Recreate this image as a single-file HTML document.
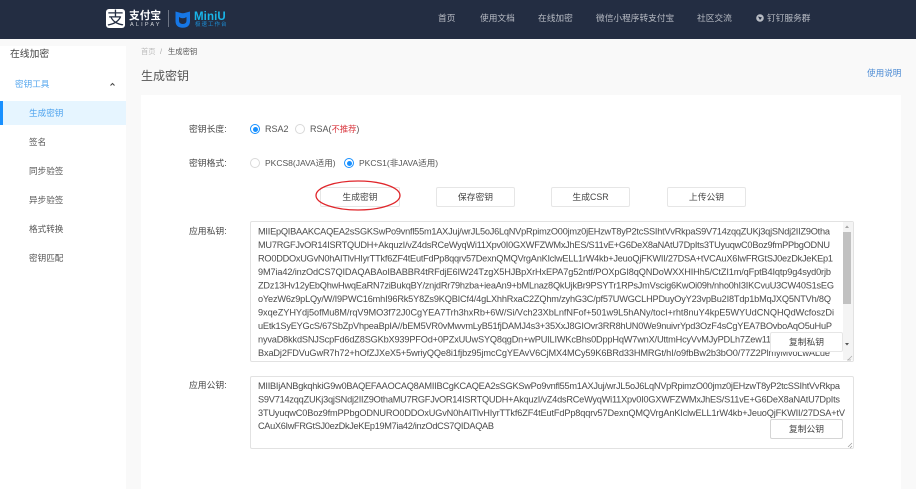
<!DOCTYPE html>
<html lang="zh-CN">
<head>
<meta charset="utf-8">
<title>生成密钥</title>
<style>
html,body{margin:0;padding:0;width:918px;height:489px;overflow:hidden;background:#f9f9f9}
body{position:relative;font-family:"Liberation Sans","Noto Sans CJK SC",sans-serif;color:#555}
.a{position:absolute;white-space:nowrap;line-height:12px}
.head{position:absolute;left:0;top:0;width:918px;height:39px;background:#232d42}
.nav{color:#b8bcc4;font-size:8.7px;top:12px}
.side{position:absolute;left:0;top:46px;width:126px;height:443px;background:#fff}
.card{position:absolute;left:141px;top:95px;width:760px;height:394px;background:#fff}
.mi{font-size:8.6px;left:29px;color:#555}
.lab{font-size:8.8px;color:#444;left:189px}
.opt{font-size:9px;color:#555}
.r{position:absolute;width:8px;height:8px;border:1px solid #d9d9d9;border-radius:50%;background:#fff}
.r.on{border-color:#1890ff}
.r.on:after{content:"";position:absolute;left:1.5px;top:1.5px;width:5px;height:5px;border-radius:50%;background:#1890ff}
.btn{position:absolute;box-sizing:border-box;height:20px;border:1px solid #e6e6e6;border-radius:2px;background:#fff;font-size:8.8px;color:#444;text-align:center;line-height:18px}
.ta{position:absolute;box-sizing:border-box;left:250px;width:604px;background:#fff;border:1px solid #e2e2e2;border-radius:2px}
svg{position:absolute;left:0;top:0}
.k{font-family:"Liberation Sans",sans-serif;font-size:9.2px;fill:#4a4a4a}
</style>
</head>
<body>
<div class="head"></div>
<div class="a" style="left:916px;top:0;width:2px;height:489px;background:#fff"></div>

<!-- logo -->
<div class="a" style="left:106px;top:9px;width:19px;height:19px;background:#fff;border-radius:3px;color:#232d42;font-size:17px;line-height:19px;text-align:center">支</div>
<div class="a" style="left:129px;top:10px;color:#fff;font-size:10.7px;line-height:12px;font-weight:bold">支付宝</div>
<div class="a" style="left:130px;top:22px;color:#d5d8dd;font-size:5.500px;line-height:7px;letter-spacing:2.200px">ALIPAY</div>
<div class="a" style="left:168px;top:10px;width:1px;height:17px;background:#6d7585"></div>
<svg width="918" height="40" style="z-index:1">
<path d="M175.500 11.500 L180 12.800 Q182.800 13.800 185.500 12.800 L190 11.500 L190 21 Q190 27.500 182.800 27.800 Q175.500 27.500 175.500 21 Z" fill="#1677e6"/>
<path d="M179 17 L179 20.500 Q179 24 182.800 24 Q186.500 24 186.500 20.500 L186.500 17 Q182.800 19.500 179 17 Z" fill="#232d42"/>
</svg>
<div class="a" style="left:194px;top:10px;color:#19b5e8;font-size:11.500px;line-height:14px;font-weight:bold;letter-spacing:.1px">MiniU</div>
<div class="a" style="left:195px;top:22px;color:#1b8fd8;font-size:5.500px;line-height:7px;letter-spacing:1px">极速工作台</div>

<!-- nav -->
<div class="a nav" style="left:438px">首页</div>
<div class="a nav" style="left:480px">使用文档</div>
<div class="a nav" style="left:538px">在线加密</div>
<div class="a nav" style="left:596px">微信小程序转支付宝</div>
<div class="a nav" style="left:697px">社区交流</div>
<svg width="918" height="40" style="z-index:1"><circle cx="760" cy="18" r="3.800" fill="#b8bcc4"/><path d="M758 16.500 L762 17.500 L760 20 Z" fill="#232d42"/></svg>
<div class="a nav" style="left:767px">钉钉服务群</div>

<!-- sidebar -->
<div class="side"></div>
<div class="a" style="left:10px;top:49px;font-size:9.800px;color:#444">在线加密</div>
<div class="a" style="left:15px;top:78px;font-size:8.600px;color:#55a6ee">密钥工具</div>
<svg width="130" height="100" style="z-index:1"><path d="M110.500 85.500 L112.500 83.500 L114.500 85.500" fill="none" stroke="#444" stroke-width="1"/></svg>
<div class="a" style="left:0;top:101px;width:126px;height:24px;background:#e6f5ff"></div>
<div class="a" style="left:0;top:101px;width:3px;height:24px;background:#1890ff"></div>
<div class="a mi" style="top:107px;color:#4ea3ee">生成密钥</div>
<div class="a mi" style="top:136px">签名</div>
<div class="a mi" style="top:165px">同步验签</div>
<div class="a mi" style="top:194px">异步验签</div>
<div class="a mi" style="top:223px">格式转换</div>
<div class="a mi" style="top:252px">密钥匹配</div>

<!-- header of content -->
<div class="a" style="left:141px;top:46px;font-size:7.300px;color:#bbb">首页</div>
<div class="a" style="left:160px;top:46px;font-size:7.300px;color:#aaa">/</div>
<div class="a" style="left:168px;top:46px;font-size:7.300px;color:#555">生成密钥</div>
<div class="a" style="left:141px;top:70px;font-size:12px;color:#555">生成密钥</div>
<div class="a" style="left:867px;top:67px;font-size:8.600px;color:#4a8ad4">使用说明</div>

<div class="card"></div>

<!-- options -->
<div class="a lab" style="top:123px">密钥长度:</div>
<div class="r on" style="left:250px;top:124px"></div>
<div class="a opt" style="left:265px;top:123px">RSA2</div>
<div class="r" style="left:295px;top:124px"></div>
<div class="a opt" style="left:310px;top:123px">RSA(<span style="color:#d9363e;font-size:8.300px">不推荐</span>)</div>

<div class="a lab" style="top:157px">密钥格式:</div>
<div class="r" style="left:250px;top:158px"></div>
<div class="a opt" style="left:265px;top:157px;font-size:8.500px">PKCS8(JAVA适用)</div>
<div class="r on" style="left:344px;top:158px"></div>
<div class="a opt" style="left:359px;top:157px;font-size:8.500px">PKCS1(非JAVA适用)</div>

<!-- buttons -->
<div class="btn" style="left:320px;top:187px;width:80px">生成密钥</div>
<div class="btn" style="left:436px;top:187px;width:79px">保存密钥</div>
<div class="btn" style="left:551px;top:187px;width:79px">生成CSR</div>
<div class="btn" style="left:667px;top:187px;width:79px">上传公钥</div>
<svg width="918" height="489" style="z-index:3;pointer-events:none"><ellipse cx="358" cy="195.500" rx="42" ry="14.500" fill="none" stroke="#e0262b" stroke-width="1.300"/></svg>

<!-- private key -->
<div class="a lab" style="top:225px">应用私钥:</div>
<div class="ta" style="top:221px;height:141px"></div>
<!-- public key -->
<div class="a lab" style="top:379px">应用公钥:</div>
<div class="ta" style="top:376px;height:73px"></div>

<svg width="918" height="489" style="z-index:1">
<defs><clipPath id="c"><rect x="251" y="222" width="592" height="138"/></clipPath></defs>
<g clip-path="url(#c)" class="keys">
<text class="k" x="258" y="234.500" textLength="572" lengthAdjust="spacing">MIIEpQIBAAKCAQEA2sSGKSwPo9vnfl55m1AXJuj/wrJL5oJ6LqNVpRpimzO00jmz0jEHzwT8yP2tcSSIhtVvRkpaS9V714zqqZUKj3qjSNdj2IIZ9Otha</text>
<text class="k" x="258" y="248" textLength="572" lengthAdjust="spacing">MU7RGFJvOR14ISRTQUDH+AkquzI/vZ4dsRCeWyqWi11Xpv0I0GXWFZWMxJhES/S11vE+G6DeX8aNAtU7DpIts3TUyuqwC0Boz9fmPPbgODNU</text>
<text class="k" x="258" y="261.500" textLength="575" lengthAdjust="spacing">RO0DDOxUGvN0hAITlvHIyrTTkf6ZF4tEutFdPp8qqrv57DexnQMQVrgAnKIclwELL1rW4kb+JeuoQjFKWII/27DSA+tVCAuX6IwFRGtSJ0ezDkJeKEp1</text>
<text class="k" x="258" y="275" textLength="573" lengthAdjust="spacing">9M7ia42/inzOdCS7QIDAQABAoIBABBR4tRFdjE6IW24TzgX5HJBpXrHxEPA7g52ntf/POXpGI8qQNDoWXXHIHh5/CtZI1m/qFptB4Iqtp9g4syd0rjb</text>
<text class="k" x="258" y="288.500" textLength="576" lengthAdjust="spacing">ZDz13Hv12yEbQhwHwqEaRN7ziBukqBY/znjdRr79hzba+ieaAn9+bMLnaz8QkUjkBr9PSYTr1RPsJmVscig6KwOi09h/nho0hI3IKCvuU3CW40S1sEG</text>
<text class="k" x="258" y="302" textLength="573" lengthAdjust="spacing">oYezW6z9pLQy/W/I9PWC16mhI96Rk5Y8Zs9KQBICf4/4gLXhhRxaC2ZQhm/zyhG3C/pf57UWGCLHPDuyOyY23vpBu2I8Tdp1bMqJXQ5NTVh/8Q</text>
<text class="k" x="258" y="315.500" textLength="576" lengthAdjust="spacing">9xqeZYHYdj5ofMu8M/rqV9MO3f72J0CgYEA7Trh3hxRb+6W/Si/Vch23XbLnfNFof+501w9L5hANy/tocI+rht8nuY4kpE5WYUdCNQHQdWcfoszDi</text>
<text class="k" x="258" y="329" textLength="574" lengthAdjust="spacing">uEtk1SyEYGcS/67SbZpVhpeaBpIA//bEM5VR0vMwvmLyB51fjDAMJ4s3+35XxJ8GIOvr3RR8hUN0We9nuivrYpd3OzF4sCgYEA7BOvboAqO5uHuP</text>
<text class="k" x="258" y="342.500" textLength="574" lengthAdjust="spacing">nyvaD8kkdSNJScpFd6dZ8SGKbX939PFOd+0PZxUUwSYQ8qgDn+wPUILIWKcBhs0DppHqW7wnX/UttmHcyVvMJyPDLh7Zew11PZfqTmU0VbQ</text>
<text class="k" x="258" y="356" textLength="572" lengthAdjust="spacing">BxaDj2FDVuGwR7h72+hOfZJXeX5+5wriyQQe8i1fjbz95jmcCgYEAvV6CjMX4MCy59K6BRd33HMRGt/hI/o9fbBw2b3bO0/77Z2PlmyMvoLwALue</text>
</g>
<text class="k" x="258" y="389" textLength="582" lengthAdjust="spacing">MIIBIjANBgkqhkiG9w0BAQEFAAOCAQ8AMIIBCgKCAQEA2sSGKSwPo9vnfl55m1AXJuj/wrJL5oJ6LqNVpRpimzO00jmz0jEHzwT8yP2tcSSIhtVvRkpa</text>
<text class="k" x="258" y="402.500" textLength="582" lengthAdjust="spacing">S9V714zqqZUKj3qjSNdj2IIZ9OthaMU7RGFJvOR14ISRTQUDH+AkquzI/vZ4dsRCeWyqWi11Xpv0I0GXWFZWMxJhES/S11vE+G6DeX8aNAtU7DpIts</text>
<text class="k" x="258" y="416" textLength="587" lengthAdjust="spacing">3TUyuqwC0Boz9fmPPbgODNURO0DDOxUGvN0hAITlvHIyrTTkf6ZF4tEutFdPp8qqrv57DexnQMQVrgAnKIclwELL1rW4kb+JeuoQjFKWII/27DSA+tV</text>
<text class="k" x="258" y="429" textLength="236" lengthAdjust="spacing">CAuX6IwFRGtSJ0ezDkJeKEp19M7ia42/inzOdCS7QIDAQAB</text>
<!-- scrollbar -->
<rect x="843" y="222" width="10" height="138" fill="#f4f4f4"/>
<rect x="843" y="232" width="8" height="72" fill="#c1c1c1"/>
<path d="M845 228 L847 225.500 L849 228 Z" fill="#a5a5a5"/>
<path d="M845 343 L847 345.500 L849 343 Z" fill="#555"/>
<path d="M851 360 L847 360 M852 356 L848 360" stroke="#aaa" stroke-width=".7"/>
<path d="M852 443 L848 447 M852 446 L850 448" stroke="#999" stroke-width=".7"/>
</svg>
<div class="btn" style="left:770px;top:332px;width:73px;z-index:2">复制私钥</div>
<div class="btn" style="left:770px;top:419px;width:73px;z-index:2;border-color:#d5d5d5">复制公钥</div>
</body>
</html>
